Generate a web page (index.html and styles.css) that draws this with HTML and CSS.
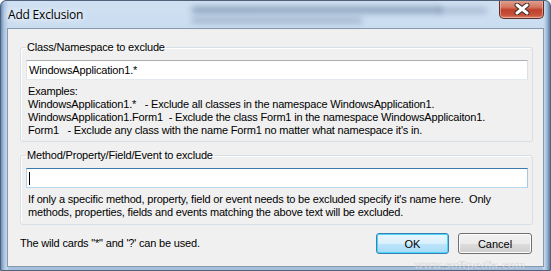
FILE: index.html
```html
<!DOCTYPE html>
<html lang="en">
<head>
    <meta charset="UTF-8">
    <title>Add Exclusion</title>
    <link rel="stylesheet" href="styles.css">
</head>
<body>
    <div class="window">
        <!-- Title bar -->
        <div class="titlebar">
            <div class="blur blur-a"></div>
            <div class="blur blur-b"></div>
            <div class="blur blur-c"></div>
            <span class="title">Add Exclusion</span>
            <div class="close-btn">
                <svg width="16" height="12" viewBox="0 0 16 12">
                    <path d="M3 2 L13 10 M13 2 L3 10" stroke="#3a2a2a" stroke-width="5" stroke-linecap="round"/>
                    <path d="M3 2 L13 10 M13 2 L3 10" stroke="#fff" stroke-width="3" stroke-linecap="round"/>
                </svg>
            </div>
        </div>

        <!-- Client area -->
        <div class="client">
            <fieldset class="group group-class">
                <legend>Class/Namespace to exclude</legend>
                <div class="field">WindowsApplication1.*</div>
                <div class="note">
                    <div>Examples:</div>
                    <div>WindowsApplication1.*&nbsp;&nbsp; - Exclude all classes in the namespace WindowsApplication1.</div>
                    <div>WindowsApplication1.Form1&nbsp; - Exclude the class Form1 in the namespace WindowsApplicaiton1.</div>
                    <div>Form1&nbsp;&nbsp; - Exclude any class with the name Form1 no matter what namespace it's in.</div>
                </div>
            </fieldset>

            <fieldset class="group group-member">
                <legend>Method/Property/Field/Event to exclude</legend>
                <div class="field field-focus"><span class="caret"></span></div>
                <div class="note">
                    <div>If only a specific method, property, field or event needs to be excluded specify it's name here.&nbsp; Only</div>
                    <div>methods, properties, fields and events matching the above text will be excluded.</div>
                </div>
            </fieldset>

            <div class="footer">
                <span class="hint">The wild cards "*" and '?' can be used.</span>
                <button class="btn btn-default">OK</button>
                <button class="btn">Cancel</button>
            </div>
        </div>

        <div class="watermark-url">www.softpedia.com</div>
    </div>
</body>
</html>
```

FILE: styles.css
```css
body {
    margin: 0;
    font-family: "Liberation Sans", Arial, sans-serif;
    font-size: 11px;
    color: #000;
}
.window {
    position: relative;
    width: 551px;
    height: 271px;
    box-sizing: border-box;
    display: flex;
    flex-direction: column;
    padding: 0 6px 3px 6px;
    border: 1px solid #52627a;
    border-radius: 6px 6px 0 0;
    overflow: hidden;
    background:
        linear-gradient(90deg, #6d8db4 0, #a9c3e0 3px, #c3d7ed 6px, transparent 8px),
        linear-gradient(270deg, #5d7a9e 0, #9cb7d6 3px, #c7dbef 6px, transparent 8px),
        linear-gradient(180deg, #cfe0f2 0, #bcd2ea 40%, #b5cde6 80%, #a6bfdc 100%);
}
.titlebar {
    position: relative;
    height: 27px;
    display: flex;
    align-items: flex-start;
}
.blur {
    position: absolute;
    background: #4f6a8a;
    filter: blur(3px);
    opacity: 0.55;
}
.blur-a {
    left: 185px;
    top: 6px;
    width: 250px;
    height: 6px;
}
.blur-b {
    left: 185px;
    top: 17px;
    width: 170px;
    height: 5px;
    opacity: 0.4;
}
.blur-c {
    left: 430px;
    top: 7px;
    width: 50px;
    height: 5px;
    opacity: 0.35;
}
.title {
    position: relative;
    margin: 6px 0 0 1px;
    font-family: "Open Sans", "Noto Sans", sans-serif;
    font-size: 12px;
    line-height: 16px;
    letter-spacing: -0.2px;
    text-shadow: 0 0 6px #fff, 0 0 8px #fff;
}
.close-btn {
    position: relative;
    margin: -1px 0 0 auto;
    width: 45px;
    height: 19px;
    box-sizing: border-box;
    border: 1px solid #5c2f2a;
    border-top: none;
    border-radius: 0 0 5px 5px;
    background: linear-gradient(180deg, #e2a493 0, #d27560 40%, #c0402c 55%, #c8533c 85%, #d98a72 100%);
    display: flex;
    justify-content: center;
    align-items: center;
    box-shadow: inset 0 0 0 1px rgba(255, 210, 200, 0.5);
}
.client {
    flex: 1;
    display: flex;
    flex-direction: column;
    background-color: #f0f0f0;
    border: 1px solid #8898ad;
    padding: 12px 10px 0 12px;
    letter-spacing: -0.18px;
}
.group {
    margin: 0;
    padding: 6px 4px 4px 5px;
    border: 1px solid #d5dfe5;
    border-radius: 3px;
    box-shadow: inset 1px 1px 0 #fff;
    min-inline-size: 0;
}
.group legend {
    padding: 0 1px;
    line-height: 13px;
}
.group-member {
    margin-top: 7px;
    padding-bottom: 5px;
}
.field {
    height: 20px;
    box-sizing: border-box;
    background: #fff;
    border: 1px solid;
    border-color: #abadb3 #dbdfe6 #e3e9ef #e2e3ea;
    padding-left: 2px;
    line-height: 18px;
    display: flex;
    align-items: center;
}
.field-focus {
    border-color: #3d7bad #a4c9e3 #b7d9ed #b5cfe7;
}
.caret {
    width: 1px;
    height: 13px;
    background: #000;
}
.note {
    margin: 5px 0 0 2px;
    line-height: 13px;
    white-space: nowrap;
}
.footer {
    display: flex;
    align-items: center;
    margin-top: 8px;
    padding-right: 1px;
}
.hint {
    margin-right: auto;
    line-height: 13px;
}
.btn {
    font-family: inherit;
    font-size: 11px;
    width: 74px;
    height: 21px;
    padding: 0;
    margin-left: 9px;
    border: 1px solid #707070;
    border-radius: 3px;
    color: #000;
    background: linear-gradient(180deg, #f2f2f2 0, #ebebeb 50%, #dddddd 51%, #cfcfcf 100%);
    box-shadow: inset 0 0 0 1px #fcfcfc;
}
.btn-default {
    width: 73px;
    border-color: #3c7fb1;
    background: linear-gradient(180deg, #eaf6fd 0, #d9f0fc 50%, #bee6fd 51%, #a7d9f5 100%);
    box-shadow: inset 0 0 0 1px #48d7fb;
}
.watermark-url {
    position: absolute;
    left: 413px;
    top: 259px;
    font-family: "DejaVu Sans", sans-serif;
    font-weight: bold;
    font-size: 10px;
    color: rgba(255, 255, 255, 0.35);
    -webkit-text-stroke: 0.5px rgba(140, 150, 170, 0.35);
    pointer-events: none;
}
```
